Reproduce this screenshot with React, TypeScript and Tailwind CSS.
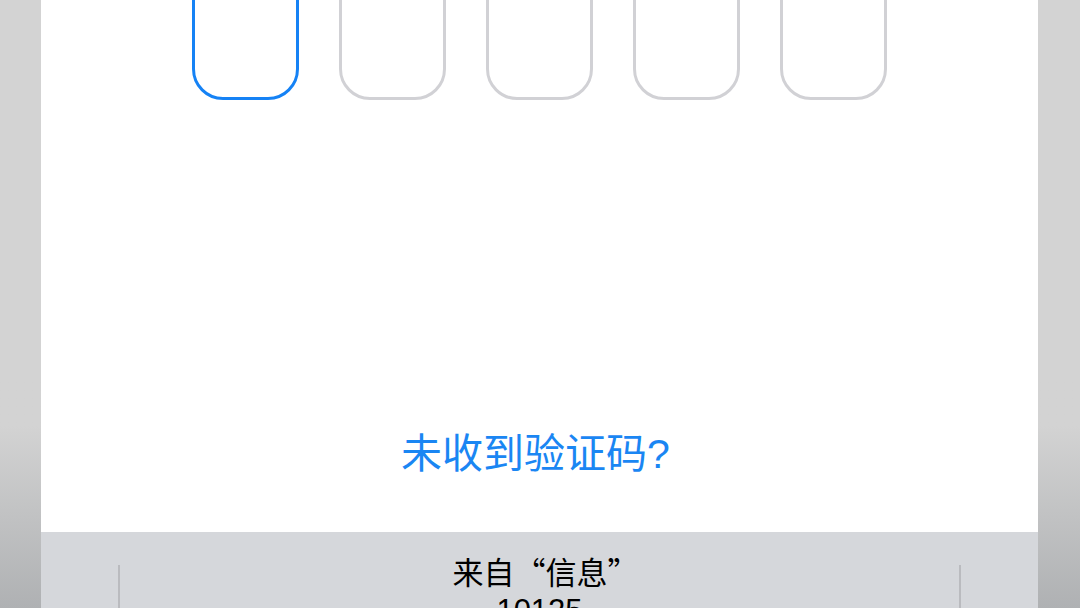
export default function App() {
  const boxes = [0, 1, 2, 3, 4];
  return (
    <div
      className="flex h-[608px] w-[1080px] overflow-hidden bg-white"
      style={{ fontFamily: '"Liberation Sans", "Noto Sans CJK SC", sans-serif' }}
    >
      {/* left dimmed edge */}
      <div className="w-[41px] shrink-0 bg-linear-to-b from-[#d3d3d3] from-70% to-[#afb1b3]" />

      <div className="flex min-w-0 flex-1 flex-col">
        {/* code entry */}
        <div className="flex h-[532px] shrink-0 flex-col bg-white">
          <div className="-mt-[30px] flex justify-center gap-[40px]">
            {boxes.map((i) => (
              <div
                key={i}
                className={
                  i === 0
                    ? "h-[130px] w-[107px] rounded-[31px] border-[3px] border-[#1582f5]"
                    : "h-[130px] w-[107px] rounded-[31px] border-[3px] border-[#d1d1d5]"
                }
              />
            ))}
          </div>
          <div className="mt-auto mb-[53px] pr-[8px] text-center text-[41px] leading-[1.2] text-[#1a86f3]">
            未收到验证码?
          </div>
        </div>

        {/* keyboard suggestion bar */}
        <div className="flex min-h-0 flex-1 overflow-hidden bg-[#d5d7db] px-[77px]">
          <div className="mt-[33px] w-[2px] bg-[#babbbf]" />
          <div className="flex-1 pt-[20px] text-center text-[31px] leading-[38px] text-black">
            <div className="pl-[12px]" style={{ fontFamily: '"Noto Sans CJK SC", sans-serif' }}>
              来自“信息”
            </div>
            <div className="pt-[2px]">10125</div>
          </div>
          <div className="mt-[33px] w-[2px] bg-[#babbbf]" />
        </div>
      </div>

      {/* right dimmed edge */}
      <div className="w-[42px] shrink-0 bg-linear-to-b from-[#d3d3d3] from-70% to-[#afb1b3]" />
    </div>
  );
}
